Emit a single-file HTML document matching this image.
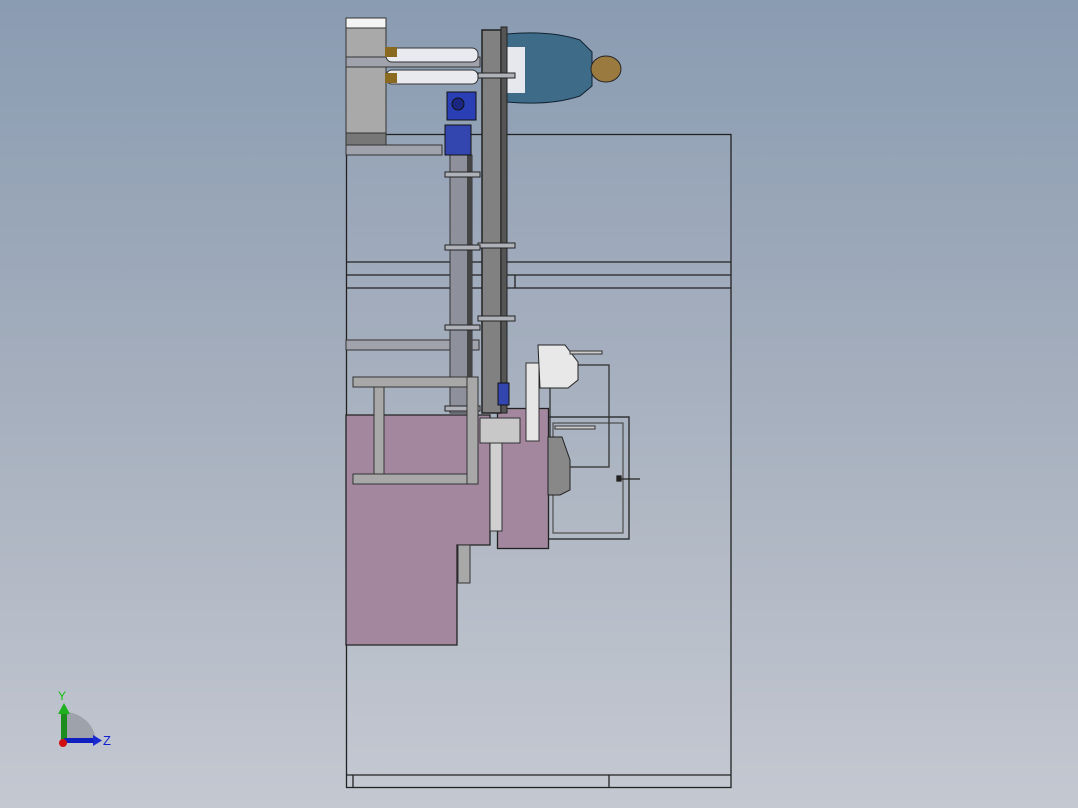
<!DOCTYPE html>
<html><head><style>
html,body{margin:0;padding:0;width:1078px;height:808px;overflow:hidden;}
body{background:linear-gradient(to bottom,#8a9cb2 0%,#a3adbc 45%,#c4c8d1 100%);}
svg{position:absolute;left:0;top:0}
</style></head><body>
<svg width="1078" height="808" viewBox="0 0 1078 808" xmlns="http://www.w3.org/2000/svg">
<g stroke="#222" stroke-width="1.3" fill="none">
<rect x="346.5" y="134.5" width="384.5" height="653" fill="rgba(255,255,255,0.03)"/>
<line x1="346" y1="262" x2="731" y2="262"/>
<line x1="346" y1="275" x2="731" y2="275"/>
<line x1="346" y1="288" x2="731" y2="288"/>
<line x1="515" y1="275" x2="515" y2="288"/>
<line x1="346" y1="775" x2="731" y2="775"/>
<line x1="353" y1="775" x2="353" y2="788"/>
<line x1="609" y1="775" x2="609" y2="788"/>
<rect x="548" y="417" width="81" height="122" fill="none"/>
<rect x="553" y="423" width="70" height="110" fill="none" stroke="#555"/>
<rect x="550" y="365" width="59" height="102" fill="none" stroke="#333"/>
<line x1="620" y1="479" x2="640" y2="479"/>
<rect x="617" y="476" width="4" height="5" fill="#222"/>
</g>
<path d="M346 415 H490 V545 H457 V645 H346 Z" fill="#a2879f" stroke="#222" stroke-width="1.3"/>
<rect x="497.5" y="408.5" width="51" height="140" fill="#a2879f" stroke="#222" stroke-width="1.3"/>
<rect x="346" y="18" width="40" height="10" fill="#f4f4f4" stroke="#333"/>
<rect x="346" y="28" width="40" height="105" fill="#a9a9a9" stroke="#333"/>
<rect x="346" y="133" width="40" height="12" fill="#777" stroke="#333"/>
<rect x="346" y="145" width="96" height="10" fill="#a0a2ac" stroke="#333"/>
<rect x="346" y="57" width="134" height="10" fill="#a0a2ac" stroke="#333"/>
<rect x="346" y="340" width="133" height="10" fill="#a0a2ac" stroke="#333"/>
<rect x="386" y="48" width="92" height="14" rx="6" fill="#e8eaf0" stroke="#333"/>
<rect x="386" y="70" width="92" height="14" rx="6" fill="#e8eaf0" stroke="#333"/>
<rect x="385" y="47" width="12" height="10" fill="#8a6a20"/>
<rect x="385" y="73" width="12" height="10" fill="#8a6a20"/>
<rect x="450" y="155" width="22" height="258" fill="#8e909c" stroke="#333"/>
<rect x="467" y="155" width="5" height="258" fill="#444"/>
<rect x="447" y="92" width="29" height="28" fill="#2a3fb5" stroke="#111"/>
<circle cx="458" cy="104" r="6" fill="#1a2680" stroke="#111"/>
<rect x="445" y="125" width="26" height="30" fill="#3346b0" stroke="#111"/>
<path d="M507 34 Q550 30 580 40 L592 52 L592 86 L580 96 Q550 106 507 102 Z" fill="#3e6c88" stroke="#123"/>
<rect x="500" y="47" width="25" height="46" fill="#e6e8ee"/>
<ellipse cx="606" cy="69" rx="15" ry="13" fill="#9b7a40" stroke="#222"/>
<rect x="482" y="30" width="19" height="383" fill="#818181" stroke="#222" stroke-width="1.5"/>
<rect x="501" y="27" width="6" height="386" fill="#555" stroke="#222"/>
<rect x="498" y="383" width="11" height="22" fill="#3346b0" stroke="#111"/>
<g fill="#b0b2ba" stroke="#222">
<rect x="478" y="73" width="37" height="5"/>
<rect x="478" y="243" width="37" height="5"/>
<rect x="478" y="316" width="37" height="5"/>
<rect x="445" y="172" width="35" height="5"/>
<rect x="445" y="245" width="35" height="5"/>
<rect x="445" y="325" width="35" height="5"/>
<rect x="445" y="406" width="35" height="5"/>
</g>
<g fill="#a8a8a8" stroke="#333">
<rect x="353" y="377" width="114" height="10"/>
<rect x="353" y="474" width="114" height="10"/>
<rect x="374" y="387" width="10" height="87"/>
<rect x="467" y="377" width="11" height="107"/>
<rect x="480" y="418" width="40" height="25" fill="#c8c8c8"/>
<rect x="490" y="443" width="12" height="88" fill="#d0d0d0"/>
<rect x="526" y="363" width="13" height="78" fill="#e6e6e6"/>
<rect x="458" y="545" width="12" height="38"/>
</g>
<path d="M538 345 H565 L578 362 V380 L568 388 H540 Z" fill="#e8e8e8" stroke="#222"/>
<rect x="570" y="351" width="32" height="3" fill="#ccc" stroke="#333"/>
<path d="M548 437 H562 L570 460 V490 L560 495 H548 Z" fill="#888" stroke="#222"/>
<rect x="555" y="426" width="40" height="3" fill="#ccc" stroke="#333"/>
<path d="M64 740 V712 A32 32 0 0 1 96 740 Z" fill="#9ea2aa"/>
<rect x="61" y="712" width="6" height="30" fill="#1c8c1c"/>
<path d="M58 714 L64 703 L70 714 Z" fill="#1fb01f"/>
<rect x="64" y="738" width="30" height="5" fill="#1020c0"/>
<path d="M93 735 L102 740.5 L93 746 Z" fill="#1a2ad0"/>
<circle cx="63" cy="743" r="4" fill="#d01010"/>
<text x="58" y="700" font-family="Liberation Sans, sans-serif" font-size="12" fill="#10c010">Y</text>
<text x="103" y="745" font-family="Liberation Sans, sans-serif" font-size="13" fill="#1020d0">Z</text>
</svg>
</body></html>
